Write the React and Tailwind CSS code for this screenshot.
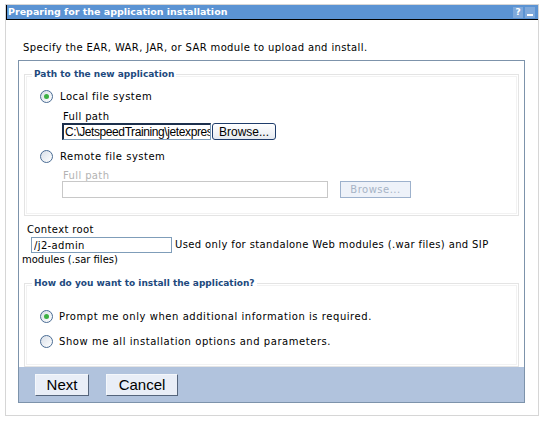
import React from 'react';

function Radio({ checked }) {
    return (
        <span className="inline-flex items-center justify-center w-[13px] h-[13px] rounded-full border border-[#4a6c94] bg-gradient-to-br from-[#d8dfe8] to-white shrink-0">
            {checked && <span className="w-[5px] h-[5px] rounded-full bg-[#3cb043]"></span>}
        </span>
    );
}

export default function App() {
    const verdana = { fontFamily: '"DejaVu Sans", Verdana, sans-serif' };
    const tahoma = { fontFamily: '"Liberation Sans", Tahoma, sans-serif' };

    return (
        <div className="w-[545px] h-[425px] bg-white pt-[4px] pl-[5px]" style={verdana}>
            <div className="w-[534px] h-[412px] border border-[#d6d6d6] flex flex-col">
                {/* Title bar */}
                <div className="h-[15px] bg-[#5b93d3] border-b border-b-black border-l border-l-black flex items-center justify-between pl-[1px] pr-[3px]">
                    <span className="text-white font-bold text-[9.5px] leading-none">Preparing for the application installation</span>
                    <div className="flex items-center gap-[2px]">
                        <span className="w-[10px] h-[11px] bg-[#7fa9db] text-white text-[9px] font-bold leading-[11px] text-center">?</span>
                        <span className="w-[10px] h-[11px] bg-[#7fa9db] flex items-end justify-center pb-[2px]">
                            <span className="w-[6px] h-[2px] bg-white"></span>
                        </span>
                    </div>
                </div>

                <p className="text-[10px] text-black mt-[23px] ml-[17px] leading-none tracking-[0.37px]">
                    Specify the EAR, WAR, JAR, or SAR module to upload and install.
                </p>

                {/* Inner panel */}
                <div className="mt-[7px] ml-[12px] w-[507px] h-[343px] border border-[#7d93ab] flex flex-col">
                    {/* Fieldset 1 */}
                    <div className="relative mt-[13px] ml-[5px] w-[495px] h-[143px] border border-[#e4e4e4] outline outline-1 outline-offset-[-3px] outline-[#f2f2f2]">
                        <span className="absolute -top-[5px] left-[7px] bg-white px-[2px] text-[9px] font-bold text-[#21497d] leading-none">
                            Path to the new application
                        </span>
                        <div className="pt-[15px] pl-[15px]">
                            <div className="flex items-center gap-[7px] text-[10px] leading-none tracking-[0.5px]">
                                <Radio checked />
                                <span>Local file system</span>
                            </div>
                            <div className="ml-[23px] mt-[9px] text-[10px] leading-none tracking-[0.37px]">Full path</div>
                            <div className="ml-[22px] mt-[1px] flex items-center">
                                <input
                                    readOnly
                                    value="C:\JetspeedTraining\jetexpress"
                                    className="w-[149px] h-[17px] border border-[#7f9db9] border-l-2 border-l-[#1c2f4c] border-t-2 border-t-[#1c2f4c] text-[12px] leading-[14px] pl-[1px] outline-none"
                                    style={{ ...tahoma, letterSpacing: '-0.4px' }}
                                />
                                <button className="ml-[1px] w-[64px] h-[17px] rounded-[3px] border border-[#1e3c6b] bg-gradient-to-b from-white to-[#e6eaf0] text-[12px] leading-none" style={tahoma}>
                                    Browse...
                                </button>
                            </div>
                            <div className="flex items-center gap-[7px] mt-[10px] text-[10px] leading-none tracking-[0.5px]">
                                <Radio />
                                <span>Remote file system</span>
                            </div>
                            <div className="ml-[23px] mt-[8px] text-[10px] leading-none text-[#b3b3b3] tracking-[0.37px]">Full path</div>
                            <div className="ml-[22px] mt-[0px] flex items-center">
                                <div className="w-[266px] h-[17px] border border-[#c8c8c8]"></div>
                                <button className="ml-[12px] w-[71px] h-[17px] border border-[#9db1cc] bg-[#eef2f9] text-[10px] text-[#a7b4c6] leading-none tracking-[0.5px]">
                                    Browse...
                                </button>
                            </div>
                        </div>
                    </div>

                    {/* Context root */}
                    <div className="ml-[8px] mt-[9px] text-[10px] leading-none tracking-[0.37px]">Context root</div>
                    <div className="mt-[2px] text-[10px] leading-[14px] tracking-[0.37px]">
                        <input
                            readOnly
                            value="/j2-admin"
                            className="inline-block align-middle ml-[12px] w-[141px] h-[16px] border border-[#7f9db9] leading-[14px] pl-[2px] text-[10px] tracking-[0.37px] outline-none"
                            style={verdana}
                        />
                        <span className="ml-[3px] align-middle">Used only for standalone Web modules (.war files) and SIP</span>
                        <br />
                        <span className="ml-[3px] tracking-[0px]">modules (.sar files)</span>
                    </div>

                    {/* Fieldset 2 */}
                    <div className="relative mt-[16px] ml-[5px] w-[495px] h-[84px] border border-[#e4e4e4] outline outline-1 outline-offset-[-3px] outline-[#f2f2f2]">
                        <span className="absolute -top-[5px] left-[7px] bg-white px-[2px] text-[9px] font-bold text-[#21497d] leading-none">
                            How do you want to install the application?
                        </span>
                        <div className="pt-[26px] pl-[15px] flex flex-col gap-[12px]">
                            <div className="flex items-center gap-[6px] text-[10px] leading-none tracking-[0.55px]">
                                <Radio checked />
                                <span>Prompt me only when additional information is required.</span>
                            </div>
                            <div className="flex items-center gap-[6px] text-[10px] leading-none tracking-[0.55px]">
                                <Radio />
                                <span>Show me all installation options and parameters.</span>
                            </div>
                        </div>
                    </div>

                    {/* Button bar */}
                    <div className="mt-auto h-[35px] bg-[#b1c3dd] flex items-center gap-[17px] pl-[16px]" style={{ fontFamily: '"Liberation Sans", Arial, sans-serif' }}>
                        <button className="w-[54px] h-[22px] bg-[#e9eef7] border border-[#f4f7fb] border-r-[#55657c] border-b-[#55657c] text-[15px] leading-none text-black">
                            Next
                        </button>
                        <button className="w-[72px] h-[22px] bg-[#e9eef7] border border-[#f4f7fb] border-r-[#55657c] border-b-[#55657c] text-[15px] leading-none text-black">
                            Cancel
                        </button>
                    </div>
                </div>
            </div>
        </div>
    );
}
